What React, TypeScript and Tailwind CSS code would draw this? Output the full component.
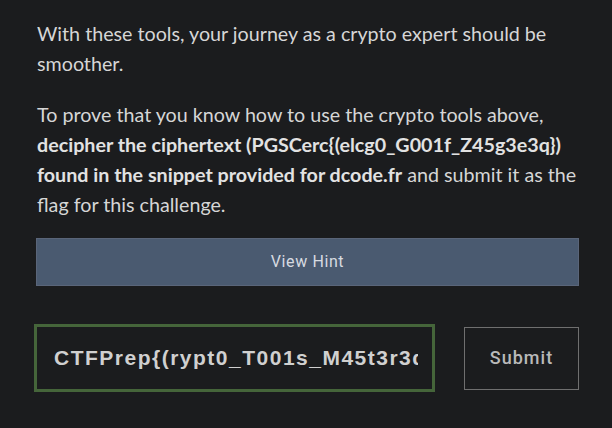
export default function App() {
  return (
    <div className="min-h-screen bg-[#1b1c1e] pl-[37px] pr-[30px] pt-[19px] text-[19.7px] leading-[30px] text-[#d6d6d6] font-['Lato','Liberation_Sans',sans-serif]">
      <p className="pr-[4px]">With these tools, your journey as a crypto expert should be smoother.</p>

      <p className="mt-[21px]">
        To prove that you know how to use the crypto tools above,{" "}
        <span className="font-bold text-[#e2e2e2]">
          decipher the ciphertext (PGSCerc{"{"}(elcg0_G001f_Z45g3e3q{"}"}) found in the snippet provided for dcode.fr
        </span>{" "}
        and submit it as the flag for this challenge.
      </p>

      <button className="mt-[18px] ml-[-1px] flex h-[48px] w-[543px] items-center justify-center border border-[#5a6579] bg-[#4a5a70] text-[16px] tracking-[0.6px] text-[#d7dbe1] font-['Roboto',sans-serif]">
        View Hint
      </button>

      <div className="mt-[38px] ml-[-3px] flex items-center gap-[29px]">
        <input
          readOnly
          value="CTFPrep{(rypt0_T001s_M45t3r3d}"
          className="h-[68px] w-[401px] shrink-0 border-[3px] border-[#45653a] bg-[#1b1c1e] pl-[17px] pr-[14px] text-[21px] font-bold tracking-[1.5px] text-[#d0d0d0] outline-none font-['Liberation_Sans','Arial',sans-serif]"
        />
        <button className="h-[63px] w-[115px] shrink-0 border border-[#6f6f6f] text-[18px] font-medium tracking-[1px] text-[#b9b9b9] font-['Roboto',sans-serif]">
          Submit
        </button>
      </div>
    </div>
  );
}
